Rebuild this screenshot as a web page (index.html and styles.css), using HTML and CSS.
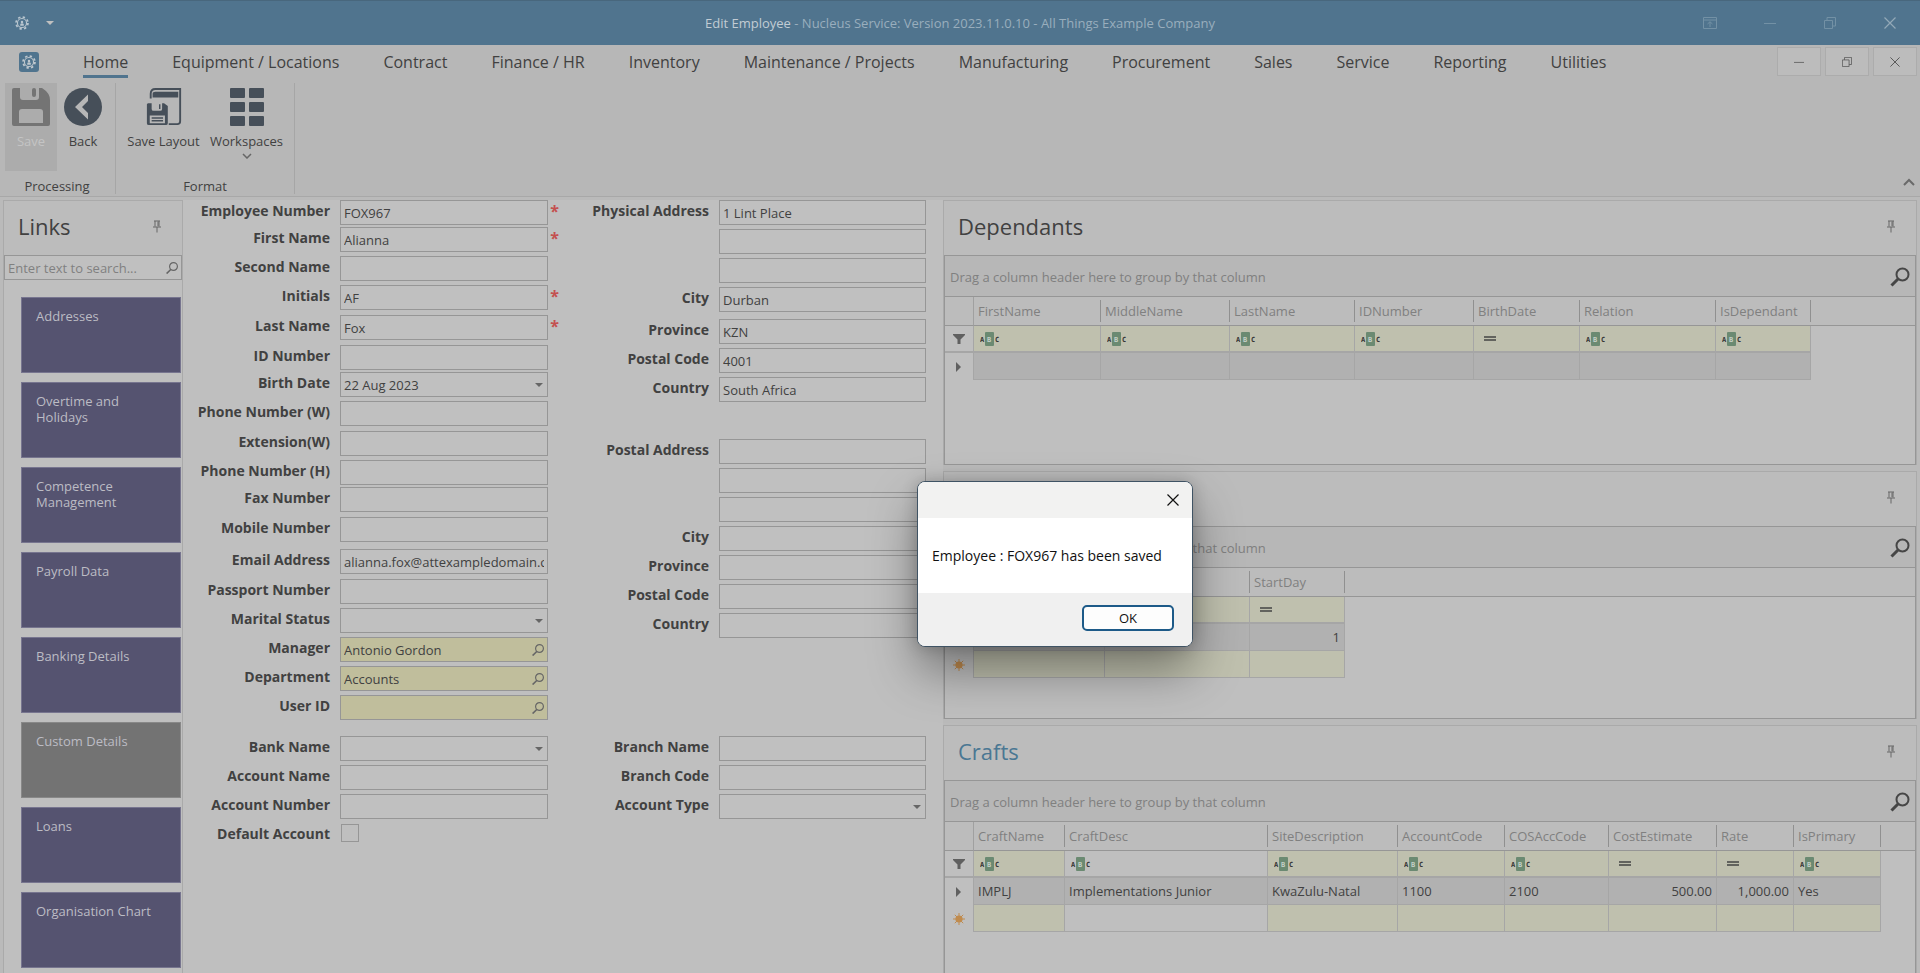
FILE: index.html
```html
<!DOCTYPE html>
<html lang="en">
  <head>
    <meta charset="utf-8">
    <title>Edit Employee - Nucleus Service</title>
    <meta name="viewport" content="width=device-width, initial-scale=1.0" />
    <link rel="stylesheet" href="styles.css">
  </head>
  <body>
    <!-- shared icons -->
    <svg class="sprite" aria-hidden="true">
      <symbol id="i-gear" viewBox="0 0 16 16">
        <circle cx="8" cy="8" r="5.200" fill="none" stroke="currentColor" stroke-width="1.300"/>
        <circle cx="8" cy="8" r="6.800" fill="none" stroke="currentColor" stroke-width="2" stroke-dasharray="2.670 2.670"/>
        <circle cx="8" cy="6.800" r="1.400" fill="currentColor"/>
        <path d="M6 11V9.600Q6 8.400 8 8.400T10 9.600V11Z" fill="currentColor"/>
      </symbol>
      <symbol id="i-pin" viewBox="0 0 10 13">
        <path d="M2 1H8M3 1V6.500M7 1V6.500M1 7H9M5 7V12.500M6 1.500V6" fill="none" stroke="currentColor"/>
      </symbol>
      <symbol id="i-find" viewBox="0 0 20 20">
        <circle cx="12.500" cy="7.500" r="6" fill="none" stroke="currentColor" stroke-width="2"/>
        <path d="M8 12L1.500 18.500" stroke="currentColor" stroke-width="3"/>
      </symbol>
      <symbol id="i-find-thin" viewBox="0 0 12 12">
        <circle cx="7.500" cy="4.500" r="3.900" fill="none" stroke="currentColor" stroke-width="1.200"/>
        <path d="M5 7.200L.6 11.600" stroke="currentColor" stroke-width="1.600"/>
      </symbol>
      <symbol id="i-funnel" viewBox="0 0 12 12">
        <path d="M0 1H12V2L7.500 6.500V11H4.500V6.500L0 2Z" fill="currentColor"/>
      </symbol>
      <symbol id="i-abc" viewBox="0 0 20 14">
        <rect x="5" width="9" height="14" rx="1" fill="#6b8a72"/>
        <text x="0" y="10" class="abc-dark">A</text>
        <text x="7" y="10" class="abc-light">B</text>
        <text x="15" y="10" class="abc-dark">C</text>
      </symbol>
      <symbol id="i-eq" viewBox="0 0 12 6">
        <path d="M0 1H12M0 4H12" stroke="currentColor" stroke-width="1.500"/>
      </symbol>
      <symbol id="i-row" viewBox="0 0 6 10">
        <path d="M0 0L5 5L0 10Z" fill="currentColor"/>
      </symbol>
      <symbol id="i-new" viewBox="0 0 12 12">
        <path d="M6 0V12M0 6H12M1.800 1.800L10.200 10.200M10.200 1.800L1.800 10.200" stroke="currentColor"/>
        <circle cx="6" cy="6" r="3.600" fill="currentColor"/>
      </symbol>
      <symbol id="i-min" viewBox="0 0 12 12"><path d="M0 6.500H12" stroke="currentColor"/></symbol>
      <symbol id="i-max" viewBox="0 0 12 12">
        <path d="M.5 3.500H8.500V11.500H.5ZM3 3.500V.5H11.500V9H8.500" fill="none" stroke="currentColor"/>
      </symbol>
      <symbol id="i-close" viewBox="0 0 12 12"><path d="M.5.5L11.500 11.500M11.500.5L.5 11.500" stroke="currentColor" stroke-width="1.200"/></symbol>
      <symbol id="i-unpin" viewBox="0 0 14 14">
        <path d="M.5 1.500H13.500V12.500H.5ZM.5 4H13.500M7 11V6M4.500 8L7 5.700L9.500 8" fill="none" stroke="currentColor"/>
      </symbol>
      <symbol id="i-save" viewBox="0 0 38 38">
        <path fill="currentColor" fill-rule="evenodd" d="M2 0H8V9Q8 12 11 12H24Q27 12 27 9V0H30Q38 5 38 12V36Q38 38 36 38H2Q0 38 0 36V2Q0 0 2 0ZM7 24V35H31V24Q31 21 28 21H10Q7 21 7 24Z"/>
        <rect x="20" width="4" height="9" rx="2" fill="currentColor"/>
      </symbol>
      <symbol id="i-back" viewBox="0 0 38 38">
        <circle cx="19" cy="19" r="19" fill="currentColor"/>
        <path d="M24 6.500L11 19L24 31.500V25L18 19L24 13Z" fill="#b7b7b7"/>
      </symbol>
      <symbol id="i-layout" viewBox="0 0 36 40">
        <path d="M4 11V6Q4 1 9 1H35V35Q35 38 32 38H23" fill="none" stroke="currentColor" stroke-width="2"/>
        <path d="M6 10V6Q6 4 9 4H33V10Z" fill="currentColor"/>
        <path fill="currentColor" fill-rule="evenodd" d="M1 16H5V22Q5 24 7 24H14Q16 24 16 22V16H18L22 19V37Q22 39 20 39H2Q0 39 0 37V17ZM3 29V37H19V29Z"/>
        <path d="M13.500 17V22M5 31.500H17M5 34.500H17" stroke="currentColor" stroke-width="1.500"/>
      </symbol>
      <symbol id="i-grid" viewBox="0 0 34 38">
        <g fill="currentColor">
          <rect width="15" height="10" rx="1"/><rect x="19" width="15" height="10" rx="1"/>
          <rect y="14" width="15" height="10" rx="1"/><rect x="19" y="14" width="15" height="10" rx="1"/>
          <rect y="28" width="15" height="10" rx="1"/><rect x="19" y="28" width="15" height="10" rx="1"/>
        </g>
      </symbol>
      <symbol id="i-down" viewBox="0 0 10 6"><path d="M1 1L5 5L9 1" fill="none" stroke="currentColor" stroke-width="1.500"/></symbol>
      <symbol id="i-up" viewBox="0 0 12 8"><path d="M1 7L6 2L11 7" fill="none" stroke="currentColor" stroke-width="2"/></symbol>
    </svg>

    <header class="titlebar">
      <div class="quick">
        <svg width="14" height="14"><use href="#i-gear"/></svg>
        <span class="caret"></span>
      </div>
      <h1><strong>Edit Employee</strong> - Nucleus Service: Version 2023.11.0.10 - All Things Example Company</h1>
      <div class="window-buttons">
        <button aria-label="Ribbon display"><svg width="14" height="14"><use href="#i-unpin"/></svg></button>
        <button aria-label="Minimise"><svg width="12" height="12"><use href="#i-min"/></svg></button>
        <button aria-label="Restore"><svg width="12" height="12"><use href="#i-max"/></svg></button>
        <button aria-label="Close"><svg class="bright" width="12" height="12"><use href="#i-close"/></svg></button>
      </div>
    </header>

    <section class="ribbon">
      <nav class="tabs">
        <button class="app" aria-label="Application menu"><svg width="14" height="14"><use href="#i-gear"/></svg></button>
        <a href="#home" class="active">Home</a>
        <a href="#equipment">Equipment / Locations</a>
        <a href="#contract">Contract</a>
        <a href="#finance">Finance / HR</a>
        <a href="#inventory">Inventory</a>
        <a href="#maintenance">Maintenance / Projects</a>
        <a href="#manufacturing">Manufacturing</a>
        <a href="#procurement">Procurement</a>
        <a href="#sales">Sales</a>
        <a href="#service">Service</a>
        <a href="#reporting">Reporting</a>
        <a href="#utilities">Utilities</a>
        <div class="mdi">
          <button aria-label="Minimise form"><svg width="10" height="10"><use href="#i-min"/></svg></button>
          <button aria-label="Restore form"><svg width="10" height="10"><use href="#i-max"/></svg></button>
          <button aria-label="Close form"><svg width="10" height="10"><use href="#i-close"/></svg></button>
        </div>
      </nav>
      <div class="groups">
        <div class="group">
          <div class="tools">
            <button class="tool" disabled><svg width="38" height="38"><use href="#i-save"/></svg>Save</button>
            <button class="tool"><svg width="38" height="38"><use href="#i-back"/></svg>Back</button>
          </div>
          <div class="caption">Processing</div>
        </div>
        <div class="group">
          <div class="tools">
            <button class="tool wide"><svg width="36" height="38"><use href="#i-layout"/></svg>Save Layout</button>
            <button class="tool wide"><svg width="34" height="38"><use href="#i-grid"/></svg>Workspaces<svg class="more" width="10" height="6"><use href="#i-down"/></svg></button>
          </div>
          <div class="caption">Format</div>
        </div>
        <button class="collapse" aria-label="Collapse ribbon"><svg width="12" height="8"><use href="#i-up"/></svg></button>
      </div>
    </section>

    <main>
      <aside class="links">
        <div class="pane-title">
          <h2>Links</h2>
          <svg width="10" height="13"><use href="#i-pin"/></svg>
        </div>
        <div class="search">
          <input type="text" aria-label="Search links" placeholder="Enter text to search...">
          <svg width="12" height="12"><use href="#i-find-thin"/></svg>
        </div>
        <div class="tiles">
          <a href="#addresses">Addresses</a>
          <a href="#overtime">Overtime and Holidays</a>
          <a href="#competence">Competence Management</a>
          <a href="#payroll">Payroll Data</a>
          <a href="#banking">Banking Details</a>
          <a href="#custom" class="off">Custom Details</a>
          <a href="#loans">Loans</a>
          <a href="#organisation">Organisation Chart</a>
        </div>
      </aside>

      <form class="details">
        <div class="fields personal">
          <label for="number">Employee Number</label><div class="field"><input id="number" value="FOX967"></div><i>*</i>
          <label for="first">First Name</label><div class="field"><input id="first" value="Alianna"></div><i>*</i>
          <label for="second">Second Name</label><div class="field"><input id="second"></div>
          <label for="initials">Initials</label><div class="field"><input id="initials" value="AF"></div><i>*</i>
          <label for="last">Last Name</label><div class="field"><input id="last" value="Fox"></div><i>*</i>
          <label for="idno">ID Number</label><div class="field"><input id="idno"></div>
          <label for="birth">Birth Date</label><div class="field drop"><input id="birth" value="22 Aug 2023"></div>
          <label for="phonew">Phone Number (W)</label><div class="field"><input id="phonew"></div>
          <label for="ext">Extension(W)</label><div class="field"><input id="ext"></div>
          <label for="phoneh">Phone Number (H)</label><div class="field"><input id="phoneh"></div>
          <label for="fax">Fax Number</label><div class="field"><input id="fax"></div>
          <label for="mobile">Mobile Number</label><div class="field"><input id="mobile"></div>
          <label for="email">Email Address</label><div class="field"><input id="email" value="alianna.fox@attexampledomain.com"></div>
          <label for="passport">Passport Number</label><div class="field"><input id="passport"></div>
          <label for="marital">Marital Status</label><div class="field drop"><select id="marital"><option></option></select></div>
          <label for="manager">Manager</label><div class="field lookup"><input id="manager" value="Antonio Gordon"><svg width="12" height="12"><use href="#i-find-thin"/></svg></div>
          <label for="dept">Department</label><div class="field lookup"><input id="dept" value="Accounts"><svg width="12" height="12"><use href="#i-find-thin"/></svg></div>
          <label for="user">User ID</label><div class="field lookup"><input id="user"><svg width="12" height="12"><use href="#i-find-thin"/></svg></div>
        </div>

        <div class="addresses">
          <div class="fields">
            <label for="pa1">Physical Address</label><div class="field"><input id="pa1" value="1 Lint Place"></div>
            <div class="field"><input aria-label="Physical address line 2"></div>
            <div class="field"><input aria-label="Physical address line 3"></div>
            <label for="pcity">City</label><div class="field"><input id="pcity" value="Durban"></div>
          </div>
          <div class="fields region">
            <label for="pprov">Province</label><div class="field"><input id="pprov" value="KZN"></div>
            <label for="pcode">Postal Code</label><div class="field"><input id="pcode" value="4001"></div>
            <label for="pcountry">Country</label><div class="field"><input id="pcountry" value="South Africa"></div>
          </div>
          <div class="fields postal">
            <label for="po1">Postal Address</label><div class="field"><input id="po1"></div>
            <div class="field"><input aria-label="Postal address line 2"></div>
            <div class="field"><input aria-label="Postal address line 3"></div>
            <label for="pocity">City</label><div class="field"><input id="pocity"></div>
            <label for="poprov">Province</label><div class="field"><input id="poprov"></div>
            <label for="pocode">Postal Code</label><div class="field"><input id="pocode"></div>
            <label for="pocountry">Country</label><div class="field"><input id="pocountry"></div>
          </div>
        </div>

        <div class="fields">
          <label for="bank">Bank Name</label><div class="field drop"><select id="bank"><option></option></select></div>
          <label for="accname">Account Name</label><div class="field"><input id="accname"></div>
          <label for="accno">Account Number</label><div class="field"><input id="accno"></div>
          <label for="default">Default Account</label><input type="checkbox" id="default">
        </div>
        <div class="fields">
          <label for="brname">Branch Name</label><div class="field"><input id="brname"></div>
          <label for="brcode">Branch Code</label><div class="field"><input id="brcode"></div>
          <label for="acctype">Account Type</label><div class="field drop"><select id="acctype"><option></option></select></div>
        </div>
      </form>

      <div class="panes">
        <section class="pane">
          <div class="pane-title">
            <h2>Dependants</h2>
            <svg width="10" height="13"><use href="#i-pin"/></svg>
          </div>
          <div class="grid">
            <div class="groupbar">
              <span>Drag a column header here to group by that column</span>
              <svg width="20" height="20"><use href="#i-find"/></svg>
            </div>
            <table>
              <colgroup><col width="29"><col width="127"><col width="129"><col width="125"><col width="119"><col width="106"><col width="136"><col width="95"><col></colgroup>
              <thead>
                <tr><th></th><th>FirstName</th><th>MiddleName</th><th>LastName</th><th>IDNumber</th><th>BirthDate</th><th>Relation</th><th>IsDependant</th><th></th></tr>
              </thead>
              <tbody>
                <tr class="filter">
                  <td><svg width="12" height="12"><use href="#i-funnel"/></svg></td>
                  <td><svg width="20" height="14"><use href="#i-abc"/></svg></td>
                  <td><svg width="20" height="14"><use href="#i-abc"/></svg></td>
                  <td><svg width="20" height="14"><use href="#i-abc"/></svg></td>
                  <td><svg width="20" height="14"><use href="#i-abc"/></svg></td>
                  <td><svg class="eq" width="12" height="6"><use href="#i-eq"/></svg></td>
                  <td><svg width="20" height="14"><use href="#i-abc"/></svg></td>
                  <td><svg width="20" height="14"><use href="#i-abc"/></svg></td>
                  <td></td>
                </tr>
                <tr class="current">
                  <td><svg width="6" height="10"><use href="#i-row"/></svg></td>
                  <td></td><td></td><td></td><td></td><td></td><td></td><td></td><td></td>
                </tr>
              </tbody>
            </table>
          </div>
        </section>

        <section class="pane">
          <div class="pane-title">
            <h2></h2>
            <svg width="10" height="13"><use href="#i-pin"/></svg>
          </div>
          <div class="grid">
            <div class="groupbar">
              <span>Drag a column header here to group by that column</span>
              <svg width="20" height="20"><use href="#i-find"/></svg>
            </div>
            <table>
              <colgroup><col width="29"><col width="131"><col width="145"><col width="95"><col></colgroup>
              <thead>
                <tr><th></th><th></th><th></th><th>StartDay</th><th></th></tr>
              </thead>
              <tbody>
                <tr class="filter">
                  <td><svg width="12" height="12"><use href="#i-funnel"/></svg></td>
                  <td></td><td></td>
                  <td><svg class="eq" width="12" height="6"><use href="#i-eq"/></svg></td>
                  <td></td>
                </tr>
                <tr class="current">
                  <td><svg width="6" height="10"><use href="#i-row"/></svg></td>
                  <td></td><td></td><td class="num">1</td><td></td>
                </tr>
                <tr class="new">
                  <td><svg width="12" height="12"><use href="#i-new"/></svg></td>
                  <td></td><td></td><td></td><td></td>
                </tr>
              </tbody>
            </table>
          </div>
        </section>

        <section class="pane focused">
          <div class="pane-title">
            <h2>Crafts</h2>
            <svg width="10" height="13"><use href="#i-pin"/></svg>
          </div>
          <div class="grid">
            <div class="groupbar">
              <span>Drag a column header here to group by that column</span>
              <svg width="20" height="20"><use href="#i-find"/></svg>
            </div>
            <table>
              <colgroup><col width="29"><col width="91"><col width="203"><col width="130"><col width="107"><col width="104"><col width="108"><col width="77"><col width="87"><col></colgroup>
              <thead>
                <tr><th></th><th>CraftName</th><th>CraftDesc</th><th>SiteDescription</th><th>AccountCode</th><th>COSAccCode</th><th>CostEstimate</th><th>Rate</th><th>IsPrimary</th><th></th></tr>
              </thead>
              <tbody>
                <tr class="filter">
                  <td><svg width="12" height="12"><use href="#i-funnel"/></svg></td>
                  <td><svg width="20" height="14"><use href="#i-abc"/></svg></td>
                  <td class="plain"><svg width="20" height="14"><use href="#i-abc"/></svg></td>
                  <td><svg width="20" height="14"><use href="#i-abc"/></svg></td>
                  <td><svg width="20" height="14"><use href="#i-abc"/></svg></td>
                  <td><svg width="20" height="14"><use href="#i-abc"/></svg></td>
                  <td><svg class="eq" width="12" height="6"><use href="#i-eq"/></svg></td>
                  <td><svg class="eq" width="12" height="6"><use href="#i-eq"/></svg></td>
                  <td><svg width="20" height="14"><use href="#i-abc"/></svg></td>
                  <td></td>
                </tr>
                <tr class="current">
                  <td><svg width="6" height="10"><use href="#i-row"/></svg></td>
                  <td>IMPLJ</td><td>Implementations Junior</td><td>KwaZulu-Natal</td><td>1100</td><td>2100</td>
                  <td class="num">500.00</td><td class="num">1,000.00</td><td>Yes</td><td></td>
                </tr>
                <tr class="new">
                  <td><svg width="12" height="12"><use href="#i-new"/></svg></td>
                  <td></td><td class="plain"></td><td></td><td></td><td></td><td></td><td></td><td></td><td></td>
                </tr>
              </tbody>
            </table>
          </div>
        </section>
      </div>
    </main>

    <div class="dialog" role="alertdialog" aria-labelledby="message">
      <div class="dialog-bar">
        <button aria-label="Close"><svg width="12" height="12"><use href="#i-close"/></svg></button>
      </div>
      <p id="message">Employee : FOX967 has been saved</p>
      <div class="dialog-foot"><button class="ok">OK</button></div>
    </div>
  </body>
</html>
```
FILE: styles.css
```css
* {
  box-sizing:border-box;
}

body {
  margin:0;
  height:100vh;
  overflow:hidden;
  display:flex;
  flex-direction:column;
  position:relative;
  background:#bababa;
  color:#414141;
  font:13px/16px 'Open Sans', sans-serif;
}

button, input, select {
  font:inherit;
  color:inherit;
}

button {
  border:0;
  padding:0;
  background:none;
}

a {
  color:inherit;
  text-decoration:none;
}

svg {
  display:block;
  flex:none;
}

.sprite {
  display:none;
}

.abc-dark, .abc-light {
  font:bold 7px 'DejaVu Sans Mono', monospace;
  fill:#333;
}

.abc-light {
  fill:#c5d0c8;
}

/* title bar */

.titlebar {
  display:grid;
  grid-template-columns:1fr auto 1fr;
  align-items:center;
  height:45px;
  flex:none;
  background:#50748e;
  border-top:1px solid #48677d;
  color:#99aebd;
}

.titlebar h1 {
  margin:0;
  font-size:13px;
  font-weight:normal;
}

.titlebar strong {
  font-weight:normal;
  color:#c2ccd4;
}

.quick {
  display:flex;
  align-items:center;
  gap:17px;
  padding-left:15px;
  color:#b9c6cf;
}

.caret {
  border:4px solid transparent;
  border-top-color:#c0c0c0;
  border-bottom:0;
}

.window-buttons {
  display:flex;
  justify-content:flex-end;
  color:#7391a5;
}

.window-buttons button {
  width:60px;
  height:44px;
  display:grid;
  place-items:center;
}

.window-buttons .bright {
  color:#93a9b8;
}

/* ribbon */

.ribbon {
  flex:none;
  background:#b7b7b7;
  border-bottom:1px solid #a8a8a8;
}

.tabs {
  display:flex;
  align-items:flex-start;
  gap:44px;
  height:36px;
  padding:2px 3px 0 19px;
  font-size:16px;
  line-height:26px;
}

.tabs a {
  padding-top:2px;
}

.tabs .active {
  border-bottom:3px solid #50748e;
}

.app {
  width:20px;
  height:20px;
  margin-top:5px;
  display:grid;
  place-items:center;
  border-radius:3px;
  background:#50748e;
  color:#c0c8ce;
}

.mdi {
  display:flex;
  gap:4px;
  margin-left:auto;
}

.mdi button {
  width:44px;
  height:29px;
  display:grid;
  place-items:center;
  border:1px solid #acacac;
  background:#bcbcbc;
  color:#5a5a5a;
}

.groups {
  display:flex;
  height:115px;
  padding:0 5px 2px;
}

.group {
  display:flex;
  flex-direction:column;
  justify-content:space-between;
  border-right:1px solid #a6a6a6;
  margin-top:2px;
  padding-right:6px;
}

.group + .group {
  padding-left:6px;
}

.tools {
  display:flex;
}

.tool {
  width:52px;
  height:88px;
  padding-top:5px;
  display:flex;
  flex-direction:column;
  align-items:center;
  gap:7px;
  color:#414141;
}

.tool svg {
  color:#464f59;
}

.tool .more {
  margin-top:-3px;
  color:#666;
}

.tool.wide {
  width:83px;
}

.tool:disabled {
  background:#acacac;
  color:#c4c4c4;
}

.tool:disabled svg {
  color:#747474;
}

.caption {
  text-align:center;
}

.collapse {
  margin-left:auto;
  align-self:flex-end;
  padding-bottom:8px;
  color:#6a6a6a;
}

/* workspace */

main {
  flex:1;
  min-height:0;
  display:grid;
  grid-template-columns:180px minmax(0, 760fr) minmax(0, 974fr);
  grid-template-rows:minmax(0, 1fr);
  padding:3px 3px 0;
}

.pane-title {
  display:flex;
  align-items:center;
  justify-content:space-between;
  height:54px;
  padding:0 20px 4px 14px;
  background:#bcbcbc;
}

.pane-title svg {
  color:#666;
}

h2 {
  margin:0;
  font-size:22px;
  line-height:30px;
  font-weight:normal;
}

.links {
  overflow:hidden;
  border:1px solid #aaa;
  border-bottom:0;
  background:#bfbfbf;
}

.search, .field {
  display:flex;
  align-items:center;
  height:25px;
  border:1px solid #969696;
  background:#c0c0c0;
}

.search {
  padding-right:3px;
}

.search input, .field input, .field select {
  flex:1;
  min-width:0;
  width:0;
  height:100%;
  padding:0 3px;
  border:0;
  background:none;
  appearance:none;
}

.search input::placeholder {
  color:#808080;
}

.search svg, .lookup svg {
  color:#666;
}

.tiles {
  display:flex;
  flex-direction:column;
  gap:9px;
  padding:17px 1px 0 17px;
}

.tiles a {
  height:76px;
  padding:10px 40px 0 14px;
  border:1px solid #77758f;
  background:#555370;
  color:#bcbcc4;
}

.tiles a:last-child {
  padding-right:10px;
}

.tiles .off {
  background:#737373;
  border-color:#888;
}

/* employee details */

.details {
  display:grid;
  grid-template-columns:minmax(0, 376fr) minmax(0, 384fr);
  align-content:start;
  row-gap:12px;
  background:#bfbfbf;
}

.fields {
  display:grid;
  grid-template-columns:157px minmax(0, 1fr) 11px;
  grid-auto-rows:29px;
}

.personal {
  grid-template-rows:27px 29px 29px 30px 30px 27px 29px 30px 29px 27px 30px 32px 30px 29px;
}

.addresses .fields, .fields:last-child {
  grid-template-columns:160px minmax(0, 1fr) 17px;
}

.region {
  margin-top:3px;
}

.postal {
  margin-top:33px;
}

.fields label {
  grid-column:1;
  padding:3px 10px 0 0;
  text-align:right;
  font-weight:bold;
  font-size:14px;
  white-space:nowrap;
}

.field {
  grid-column:2;
}

.fields i {
  grid-column:3;
  padding-top:3px;
  text-align:right;
  color:#c4504f;
  font-size:16px;
  font-weight:bold;
  font-style:normal;
}

.fields input[type=checkbox] {
  appearance:none;
  grid-column:2;
  width:18px;
  height:18px;
  margin:1px;
  border:1px solid #969696;
}

.drop::after {
  content:'';
  margin-right:4px;
  border:4px solid transparent;
  border-top-color:#666;
  border-bottom:0;
}

.lookup {
  background:#c0be9c;
  padding-right:3px;
}

/* data grids */

.panes {
  display:grid;
  grid-template-rows:265fr 248fr 248fr;
  gap:6px;
  min-height:0;
}

.pane {
  display:flex;
  flex-direction:column;
  min-height:0;
  border:1px solid #aaa;
  border-bottom:0;
}

.focused h2 {
  color:#4a7793;
}

.grid {
  flex:1;
  border:1px solid #969696;
  background:#bfbfbf;
}

.focused .grid {
  border-bottom:0;
}

.groupbar {
  display:flex;
  align-items:center;
  justify-content:space-between;
  height:41px;
  padding:2px 5px 0;
  border-bottom:1px solid #969696;
  background:#b7b7b7;
  color:#808080;
}

.groupbar svg {
  color:#464646;
}

table {
  width:100%;
  table-layout:fixed;
  border-collapse:separate;
  border-spacing:0;
}

th {
  height:29px;
  padding:0 4px;
  border-bottom:1px solid #969696;
  background:linear-gradient(#909090, #909090) right center / 1px 22px no-repeat #bcbcbc;
  color:#808080;
  font-weight:normal;
  text-align:left;
}

th:first-child {
  border-right:1px solid #a0a0a0;
}

th:first-child, th:last-child {
  background:#bcbcbc;
}

td {
  height:27px;
  padding:0 4px;
  border-right:1px solid #a6a6a6;
  border-bottom:1px solid #a6a6a6;
}

td:first-child svg {
  margin:0 auto;
  color:#606060;
}

.filter td {
  border-bottom-width:2px;
  background:#bfc0ae;
  padding-left:6px;
}

.filter td:first-child {
  padding-left:4px;
}

.filter .eq {
  margin-left:4px;
  color:#444;
}

.current td {
  background:#b1b1b1;
}

.new td {
  background:#bfc0ae;
}

.new td:first-child svg {
  color:#c08b4e;
}

tr td:first-child, tr td:last-child, tr td.plain {
  background:#bfbfbf;
}

.current td:first-child, .new td:first-child {
  border-bottom:0;
}

td:last-child, .filter td:last-child {
  border:0;
}

.num {
  text-align:right;
}

/* message box */

.dialog {
  position:absolute;
  left:917px;
  top:481px;
  width:276px;
  border:1px solid #3f5364;
  border-radius:8px;
  overflow:hidden;
  background:#fff;
  color:#111;
  box-shadow:0 24px 48px rgba(0, 0, 0, .38), 0 0 16px rgba(0, 0, 0, .2);
}

.dialog-bar {
  display:flex;
  justify-content:flex-end;
  padding:11px 13px;
  height:36px;
  background:#f2f2f1;
}

.dialog p {
  margin:0;
  padding:30px 14px 29px;
  font-size:14px;
}

.dialog-foot {
  display:flex;
  justify-content:flex-end;
  padding:12px 18px 15px;
  background:#f0f0f0;
}

.ok {
  width:92px;
  height:26px;
  border:2px solid #1d5a88;
  border-radius:5px;
  background:#fdfdfd;
}
```
